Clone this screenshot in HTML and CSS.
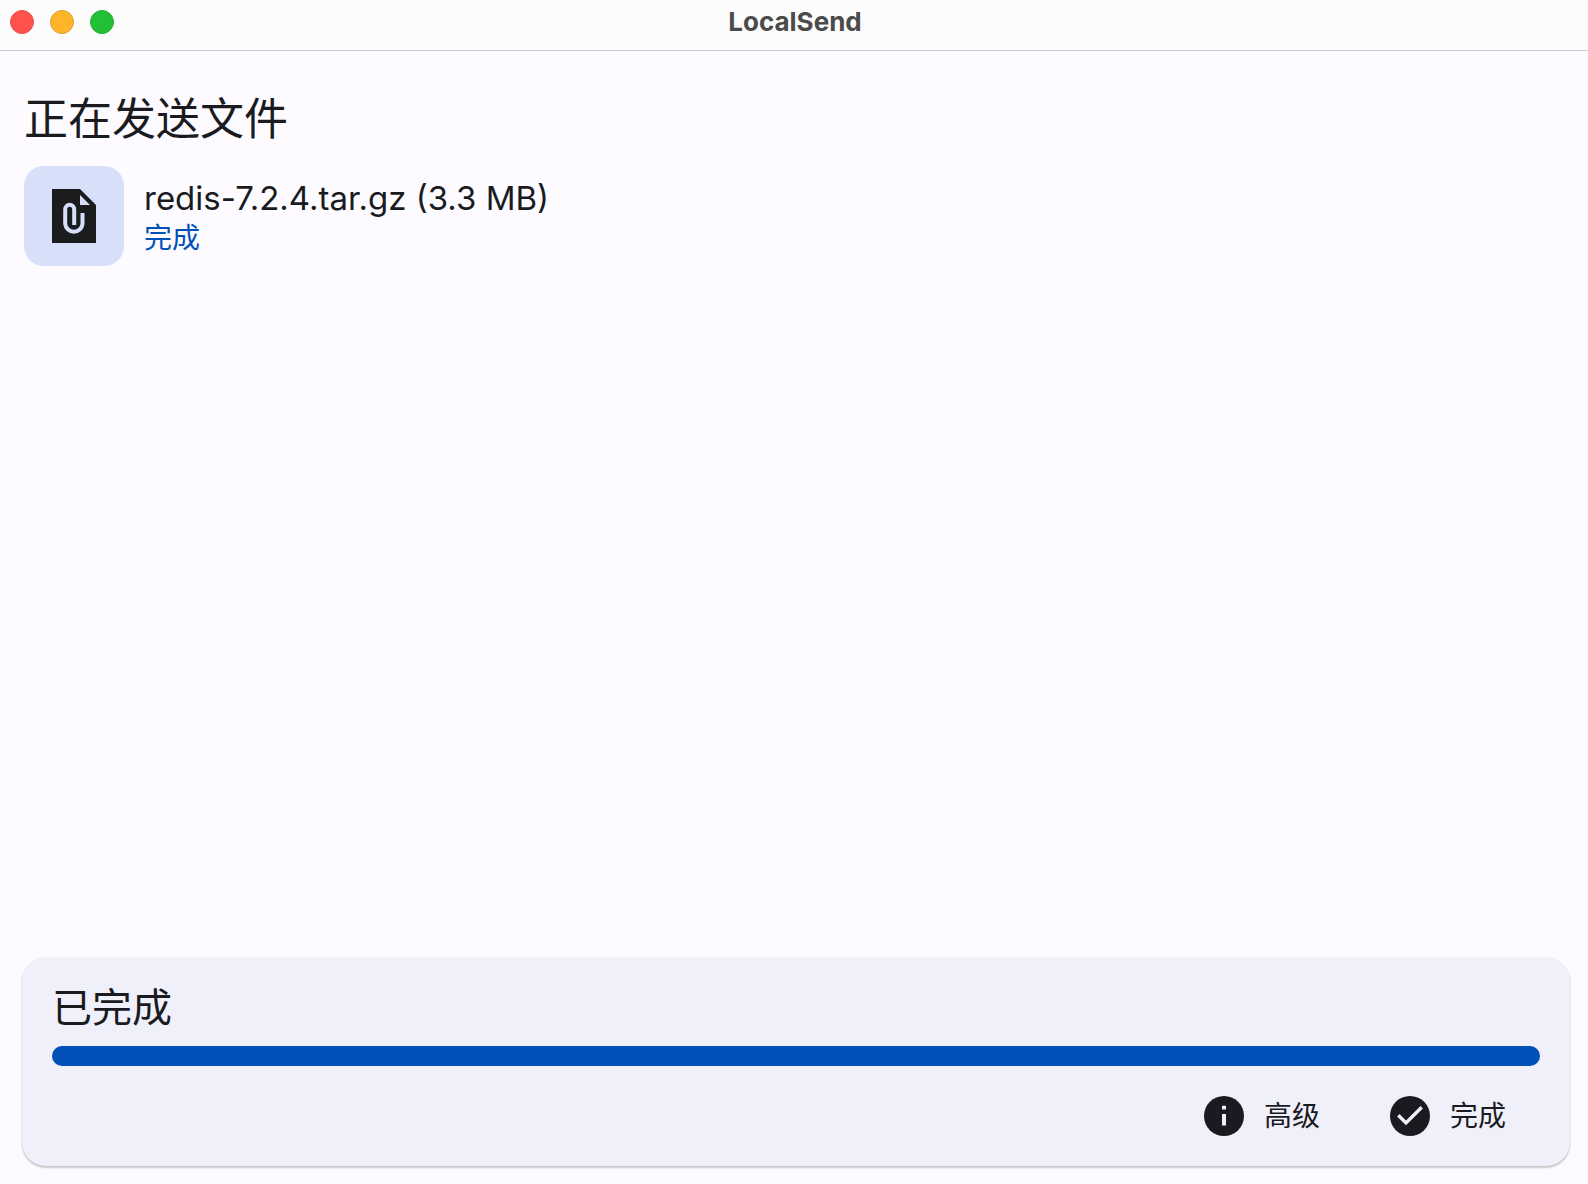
FILE: index.html
```html
<!DOCTYPE html>
<html lang="zh-CN">
<head>
<meta charset="utf-8">
<meta name="viewport" content="width=device-width, initial-scale=1">
<title>LocalSend</title>
<link rel="stylesheet" href="styles.css">
</head>
<body>
<header class="titlebar">
  <div class="window-controls">
    <button class="control control-close" type="button" aria-label="关闭"></button>
    <button class="control control-minimize" type="button" aria-label="最小化"></button>
    <button class="control control-zoom" type="button" aria-label="缩放"></button>
  </div>
  <span class="window-title">LocalSend</span>
</header>
<main class="content">
  <h1 class="heading">正在发送文件</h1>
  <ul class="files">
    <li class="file">
      <span class="file-tile">
        <svg class="file-icon" viewBox="0 0 44 54" aria-hidden="true">
          <path fill="#1a1c1e" d="M0 0H28L44 16V54H0Z"/>
          <path fill="#d8dff9" d="M28 6V16H38Z"/>
          <path fill="none" stroke="#d8dff9" stroke-width="4" d="M30.500 24V35A8.700 8.700 0 0 1 13.200 35V20.300A4.500 4.500 0 0 1 22.200 20.300V36"/>
        </svg>
      </span>
      <div class="file-text">
        <span class="file-name">redis-7.2.4.tar.gz (3.3 MB)</span>
        <span class="file-status">完成</span>
      </div>
    </li>
  </ul>
</main>
<section class="card">
  <h2 class="card-title" id="state">已完成</h2>
  <progress class="progress" value="100" max="100" aria-labelledby="state"></progress>
  <div class="actions">
    <button class="action" type="button">
      <svg class="action-icon" viewBox="0 0 48 48" aria-hidden="true">
        <circle cx="24" cy="24" r="20" fill="#1a1b20"/>
        <path fill="#f0f0fa" d="M22 22H26V33.500H22ZM22 13.800H26V17.500H22Z"/>
      </svg>
      高级
    </button>
    <button class="action" type="button">
      <svg class="action-icon" viewBox="0 0 48 48" aria-hidden="true">
        <circle cx="24" cy="24" r="20" fill="#1a1b20"/>
        <path fill="none" stroke="#f0f0fa" stroke-width="3.4" d="M12.300 23.200L20 30.900L35.700 15.200"/>
      </svg>
      完成
    </button>
  </div>
</section>
</body>
</html>
```

FILE: styles.css
```css
* {
  box-sizing: border-box;
}

body {
  margin: 0;
  min-height: 100vh;
  display: flex;
  flex-direction: column;
  background: #fdfbff;
  color: #1a1b1f;
  font-family: Inter, "Noto Sans CJK SC", sans-serif;
}

button {
  border: 0;
  padding: 0;
  background: none;
  color: inherit;
  font: inherit;
}

.titlebar {
  display: grid;
  grid-template-columns: 1fr auto 1fr;
  align-items: center;
  height: 51px;
  padding: 0 8px 6px 10px;
  background: #fcfcfc;
  border-bottom: 1px solid #cfcdd0;
}

.window-controls {
  display: flex;
  gap: 16px;
}

.control {
  width: 24px;
  height: 24px;
  border-radius: 50%;
  border: 1px solid;
}

.control-close {
  background: #ff524d;
  border-color: #e5504b;
}

.control-minimize {
  background: #ffb429;
  border-color: #e0a02c;
}

.control-zoom {
  background: #22c036;
  border-color: #27a935;
}

.window-title {
  color: #4b4b4b;
  font-size: 26px;
  font-weight: 700;
  line-height: 32px;
}

.content {
  flex: 1;
  padding: 36px 24px;
}

.heading {
  margin: 0 0 15px;
  font-size: 44px;
  font-weight: 400;
  line-height: 64px;
}

.files {
  margin: 0;
  padding: 0;
  list-style: none;
}

.file {
  display: flex;
  gap: 20px;
}

.file-tile {
  display: grid;
  place-items: center;
  width: 100px;
  height: 100px;
  border-radius: 20px;
  background: #d8dff9;
}

.file-icon {
  width: 44px;
  height: 54px;
}

.file-text {
  display: flex;
  flex-direction: column;
  padding-top: 12px;
}

.file-name {
  font-size: 33px;
  line-height: 40px;
}

.file-status {
  color: #0050b8;
  font-size: 28px;
  line-height: 40px;
}

.card {
  margin: 0 18px 18px 22px;
  padding: 20px 30px;
  border-radius: 24px;
  background: #f0f0fa;
  box-shadow: 0 2px 2px rgba(0, 0, 0, 0.2), 0 0 2px rgba(0, 0, 0, 0.1);
}

.card-title {
  margin: 0 0 8px;
  font-size: 40px;
  font-weight: 400;
  line-height: 60px;
}

.progress {
  display: block;
  width: 100%;
  height: 20px;
  border: 0;
  border-radius: 10px;
  overflow: hidden;
  appearance: none;
  background: #d8dff9;
}

.progress::-webkit-progress-bar {
  background: #d8dff9;
}

.progress::-webkit-progress-value {
  background: #0050b8;
}

.progress::-moz-progress-bar {
  background: #0050b8;
}

.actions {
  display: flex;
  justify-content: flex-end;
  padding-top: 20px;
}

.action {
  display: flex;
  align-items: center;
  gap: 16px;
  height: 60px;
  padding: 0 34px 0 32px;
  font-size: 28px;
  line-height: 40px;
}

.action-icon {
  width: 48px;
  height: 48px;
}
```
